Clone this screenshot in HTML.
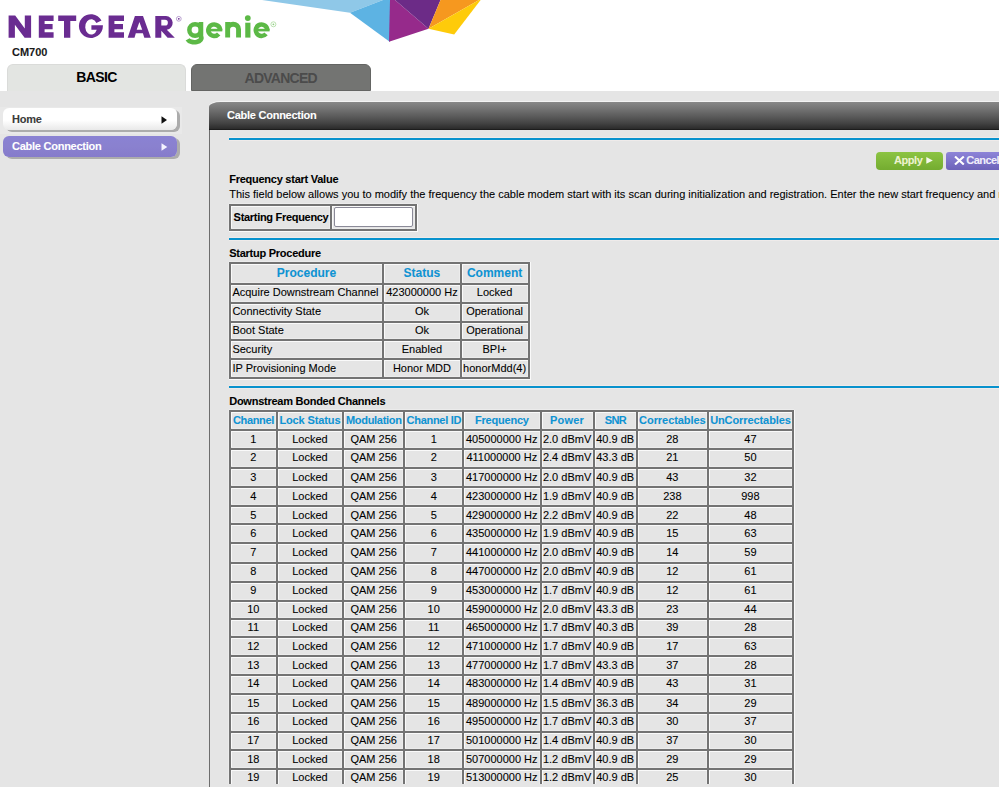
<!DOCTYPE html>
<html><head><meta charset="utf-8">
<style>
*{margin:0;padding:0;box-sizing:border-box}
html,body{width:999px;height:787px;overflow:hidden;background:#fff;font-family:"Liberation Sans",sans-serif;color:#000}
.a{position:absolute;white-space:nowrap}
.b11{font-size:11px;line-height:11px;font-weight:bold;letter-spacing:-0.25px}
.n11{font-size:11px;line-height:11px}
.a{-webkit-text-stroke-width:0.08px}
#band{position:absolute;left:0;top:91px;width:999px;height:696px;background:#e5e5e5}
.tab{position:absolute;top:64px;height:27px;border-radius:6px 6px 0 0;text-align:center;font-size:14px;line-height:14px;font-weight:bold;letter-spacing:-0.6px}
#basic{left:7px;width:179px;background:#e3e5e2;color:#000;border:1px solid #dadbd9;border-bottom:0}
#adv{left:191px;width:179.5px;height:26.5px;background:#737472;color:#4b4b4b;border:1px solid #646563}
.side{position:absolute;left:3px;width:174px;height:22px;border-radius:6px;box-shadow:3px 2px 0 #acacac}
#home{top:108px;background:linear-gradient(#fff 0%,#fff 55%,#e9e9e9 100%)}
#cc{top:135.7px;height:21px;background:linear-gradient(#8a82d3,#8a81cf 50%,#857bcb)}
#panel{position:absolute;left:209px;top:129px;width:800px;height:658px;border-left:1px solid #6d6d6d}
#phead{position:absolute;left:209px;top:102px;width:800px;height:27.5px;border-top-left-radius:12px 5px;background:linear-gradient(#888,#737373 25%,#5c5c5c 50%,#444 75%,#2c2c2c 95%,#141414);box-shadow:0 -1px 0 #f3f3f3}
.blue{position:absolute;left:229px;width:780px;height:2px;background:#0892cd}
</style></head><body>
<svg class="a" style="left:0;top:0" width="999" height="60" viewBox="0 0 999 60">
  <!-- NETGEAR -->
  <g fill="#6a2c91">
    <polygon points="8.6,37.7 8.6,15.6 15.2,15.6 24.8,28.5 24.8,15.6 31.1,15.6 31.1,37.7 24.6,37.7 14.9,24.8 14.9,37.7"/>
    <polygon points="38.8,15.6 53.6,15.6 53.6,21 44.6,21 44.6,24 52.6,24 52.6,29.3 44.6,29.3 44.6,32.3 53.6,32.3 53.6,37.7 38.8,37.7"/>
    <polygon points="58.2,15.6 76.2,15.6 76.2,21 70.3,21 70.3,37.7 64,37.7 64,21 58.2,21"/>
    <polygon points="108.6,15.6 124,15.6 124,21 114.4,21 114.4,24 123,24 123,29.3 114.4,29.3 114.4,32.3 124,32.3 124,37.7 108.6,37.7"/>
    <path fill-rule="evenodd" d="M127.7,37.8 L134.9,15.9 H143 L150.8,37.8 H144.3 L142.9,33.3 H135.8 L134.5,37.8 Z M139.4,21.9 L142.2,29.7 H136.7 Z"/>
    <path fill-rule="evenodd" d="M155.3,37.8 V15.9 H166 A7,7 0 0 1 166.8,29.8 L174.8,37.8 H167.6 L161.3,30.8 V37.8 Z M161.3,19.8 H165 A2.85,2.85 0 0 1 165,25.5 H161.3 Z"/>
    <path d="M101.5,20.5 A12,11.9 0 1 0 102.9,26 L102.9,25.2 L91.4,25.2 L91.4,29.7 L96.8,29.7 A6,7.6 0 1 1 96.4,23 Z"/>
  </g>
  <circle cx="178.8" cy="18.8" r="2.4" fill="none" stroke="#a98cc4" stroke-width="0.8"/>
  <circle cx="178.8" cy="18.8" r="0.9" fill="#6a2c91"/>
  <g fill="none" stroke="#5cb946" stroke-width="4.7">
    <ellipse cx="195.1" cy="30" rx="5.75" ry="5.7" stroke-width="4.5"/>
    <path d="M200.95,21.9 V36.5 A6.6,4 0 0 1 187.6,39.4" stroke-width="4.6"/>
    <path d="M220.1,30.2 A5.9,5.75 0 1 0 218.7,33.9" stroke-width="4.5"/>
    <path d="M209,30.1 H222.3" stroke-width="2.6"/>
    <path d="M227.65,37.6 V21.9 M227.65,29.2 A5.45,5 0 0 1 238.55,29.2 V37.6" stroke-width="4.9"/>
    <path d="M247.85,22.7 V37.6" stroke-width="5.2"/>
    <path d="M267.3,30.2 A5.75,5.75 0 1 0 266,33.9" stroke-width="4.5"/>
    <path d="M256,30.1 H269.6" stroke-width="2.6"/>
  </g>
  <circle cx="247.8" cy="18.1" r="2.9" fill="#5cb946"/>
  <circle cx="273.4" cy="24.3" r="2.5" fill="none" stroke="#b4dfa8" stroke-width="0.9"/>
  <circle cx="273.4" cy="24.3" r="0.9" fill="#8fcf80"/>
  <!-- logo shards -->
  <polygon points="262,0 383,0 350,12.8" fill="#8fc8e8"/>
  <polygon points="350,12.8 383,0 390,0 390,42" fill="#5db3e3"/>
  <polygon points="390,0 395,0 428.5,28.8 389,41.7" fill="#962a8b"/>
  <polygon points="395,0 440.5,0 428.5,28.8" fill="#6c2b87"/>
  <polygon points="440.5,0 479,0 428.5,28.8" fill="#f6981f"/>
  <polygon points="480.6,0 454.2,34.5 428.5,28.8 479,0" fill="#fecb0a"/>
</svg>
<div class="a b11" style="left:12px;top:47px;color:#1a1a1a;letter-spacing:0">CM700</div>
<div id="band"></div>
<div class="tab" id="basic"><div style="padding-top:5.2px">BASIC</div></div>
<div class="tab" id="adv"><div style="padding-top:5.5px;letter-spacing:-0.75px">ADVANCED</div></div>
<div class="a" style="left:0;top:107px;width:182px;height:26.5px;background:#e9e9e9"></div>
<div class="side" id="home"><div class="a b11" style="left:9px;top:5.5px;color:#3a3a3a">Home</div><svg class="a" style="left:158px;top:8px" width="7" height="8" viewBox="0 0 7 8"><polygon points="0.5,0.3 6,4 0.5,7.7" fill="#111"/></svg></div>
<div class="side" id="cc"><div class="a b11" style="left:9px;top:5px;color:#fff">Cable Connection</div><svg class="a" style="left:158px;top:7px" width="7" height="8" viewBox="0 0 7 8"><polygon points="0.5,0.3 6.3,4 0.5,7.7" fill="#f4f2ff"/></svg></div>
<div id="panel"></div>

<div id="phead"></div>
<div class="a" style="left:227.00px;top:110.09px;font-size:11px;line-height:11px;font-weight:bold;color:#fff;letter-spacing:-0.25px;">Cable Connection</div>
<div class="a" style="left:229px;top:137px;width:780px;height:4px;background:#efebea"></div>
<div class="blue" style="top:138px"></div>
<div class="a" style="left:229px;top:237px;width:780px;height:4px;background:#efebea"></div>
<div class="blue" style="top:238px"></div>
<div class="a" style="left:229px;top:385px;width:780px;height:4px;background:#efebea"></div>
<div class="blue" style="top:386px"></div>
<div class="a" style="left:876px;top:152px;width:67px;height:17.5px;border-radius:4px;background:linear-gradient(#8cc443,#74ac30)"></div>
<div class="a" style="left:894.00px;top:154.59px;font-size:11px;line-height:11px;font-weight:bold;color:#eef3d0;letter-spacing:-0.45px;">Apply</div>
<svg class="a" style="left:926px;top:157px" width="7" height="7" viewBox="0 0 7 7"><polygon points="0.3,0 6.8,3.4 0.3,6.8" fill="#f4f8ec"/></svg>
<div class="a" style="left:946px;top:152px;width:60px;height:17.5px;border-radius:3px;background:linear-gradient(#8d84d8,#6d63b9)"></div>
<svg class="a" style="left:954px;top:156px" width="11" height="9" viewBox="0 0 11 9"><path d="M1,0.5 L9.8,8.5 M9.8,0.5 L1,8.5" stroke="#fff" stroke-width="2.1"/></svg>
<div class="a" style="left:966.30px;top:154.59px;font-size:11px;line-height:11px;font-weight:bold;color:#f0eefa;letter-spacing:-0.55px;">Cancel</div>
<div class="a" style="left:229.20px;top:173.79px;font-size:11px;line-height:11px;font-weight:bold;color:#000;letter-spacing:-0.25px;">Frequency start Value</div>
<div class="a" style="left:229.20px;top:189.09px;font-size:11px;line-height:11px;font-weight:normal;color:#000;letter-spacing:0px;">This field below allows you to modify the frequency the cable modem start with its scan during initialization and registration. Enter the new start frequency and registration.</div>
<div class="a" style="left:228px;top:204px;width:1px;height:27px;background:#ececec"></div>
<div class="a" style="left:231px;top:204px;width:1px;height:27px;background:#fafafa"></div>
<div class="a" style="left:329px;top:204px;width:1px;height:27px;background:#ececec"></div>
<div class="a" style="left:332px;top:204px;width:1px;height:27px;background:#fafafa"></div>
<div class="a" style="left:414px;top:204px;width:1px;height:27px;background:#ececec"></div>
<div class="a" style="left:417px;top:204px;width:1px;height:27px;background:#fafafa"></div>
<div class="a" style="left:229px;top:203px;width:188px;height:1px;background:#ececec"></div>
<div class="a" style="left:229px;top:206px;width:189px;height:1px;background:#fafafa"></div>
<div class="a" style="left:229px;top:228px;width:188px;height:1px;background:#ececec"></div>
<div class="a" style="left:229px;top:231px;width:189px;height:1px;background:#fafafa"></div>
<div class="a" style="left:229px;top:204px;width:2px;height:27px;background:#737373"></div>
<div class="a" style="left:330px;top:204px;width:2px;height:27px;background:#737373"></div>
<div class="a" style="left:415px;top:204px;width:2px;height:27px;background:#737373"></div>
<div class="a" style="left:229px;top:204px;width:188px;height:2px;background:#737373"></div>
<div class="a" style="left:229px;top:229px;width:188px;height:2px;background:#737373"></div>
<div class="a" style="left:233.60px;top:211.59px;font-size:11px;line-height:11px;font-weight:bold;color:#000;letter-spacing:-0.3px;">Starting Frequency</div>
<div class="a" style="left:334px;top:207px;width:79px;height:20px;background:#fff;border:1px solid #8b8a98;border-radius:2px"></div>
<div class="a" style="left:229.20px;top:247.99px;font-size:11px;line-height:11px;font-weight:bold;color:#000;letter-spacing:-0.25px;">Startup Procedure</div>
<div class="a" style="left:228px;top:262px;width:1px;height:117px;background:#ececec"></div>
<div class="a" style="left:231px;top:262px;width:1px;height:117px;background:#fafafa"></div>
<div class="a" style="left:381px;top:262px;width:1px;height:117px;background:#ececec"></div>
<div class="a" style="left:384px;top:262px;width:1px;height:117px;background:#fafafa"></div>
<div class="a" style="left:459px;top:262px;width:1px;height:117px;background:#ececec"></div>
<div class="a" style="left:462px;top:262px;width:1px;height:117px;background:#fafafa"></div>
<div class="a" style="left:527px;top:262px;width:1px;height:117px;background:#ececec"></div>
<div class="a" style="left:530px;top:262px;width:1px;height:117px;background:#fafafa"></div>
<div class="a" style="left:229px;top:261px;width:301px;height:1px;background:#ececec"></div>
<div class="a" style="left:229px;top:264px;width:302px;height:1px;background:#fafafa"></div>
<div class="a" style="left:229px;top:282px;width:301px;height:1px;background:#ececec"></div>
<div class="a" style="left:229px;top:285px;width:302px;height:1px;background:#fafafa"></div>
<div class="a" style="left:229px;top:301px;width:301px;height:1px;background:#ececec"></div>
<div class="a" style="left:229px;top:304px;width:302px;height:1px;background:#fafafa"></div>
<div class="a" style="left:229px;top:320px;width:301px;height:1px;background:#ececec"></div>
<div class="a" style="left:229px;top:323px;width:302px;height:1px;background:#fafafa"></div>
<div class="a" style="left:229px;top:338px;width:301px;height:1px;background:#ececec"></div>
<div class="a" style="left:229px;top:341px;width:302px;height:1px;background:#fafafa"></div>
<div class="a" style="left:229px;top:357px;width:301px;height:1px;background:#ececec"></div>
<div class="a" style="left:229px;top:360px;width:302px;height:1px;background:#fafafa"></div>
<div class="a" style="left:229px;top:376px;width:301px;height:1px;background:#ececec"></div>
<div class="a" style="left:229px;top:379px;width:302px;height:1px;background:#fafafa"></div>
<div class="a" style="left:229px;top:262px;width:2px;height:117px;background:#737373"></div>
<div class="a" style="left:382px;top:262px;width:2px;height:117px;background:#737373"></div>
<div class="a" style="left:460px;top:262px;width:2px;height:117px;background:#737373"></div>
<div class="a" style="left:528px;top:262px;width:2px;height:117px;background:#737373"></div>
<div class="a" style="left:229px;top:262px;width:301px;height:2px;background:#737373"></div>
<div class="a" style="left:229px;top:283px;width:301px;height:2px;background:#737373"></div>
<div class="a" style="left:229px;top:302px;width:301px;height:2px;background:#737373"></div>
<div class="a" style="left:229px;top:321px;width:301px;height:2px;background:#737373"></div>
<div class="a" style="left:229px;top:339px;width:301px;height:2px;background:#737373"></div>
<div class="a" style="left:229px;top:358px;width:301px;height:2px;background:#737373"></div>
<div class="a" style="left:229px;top:377px;width:301px;height:2px;background:#737373"></div>
<div class="a" style="left:229.80px;width:153.50px;text-align:center;top:267.14px;font-size:12px;line-height:12px;font-weight:bold;color:#0f93d3;letter-spacing:0px;text-indent:0.00px">Procedure</div>
<div class="a" style="left:383.30px;width:77.30px;text-align:center;top:267.14px;font-size:12px;line-height:12px;font-weight:bold;color:#0f93d3;letter-spacing:0px;text-indent:0.00px">Status</div>
<div class="a" style="left:460.60px;width:68.00px;text-align:center;top:267.14px;font-size:12px;line-height:12px;font-weight:bold;color:#0f93d3;letter-spacing:0px;text-indent:0.00px">Comment</div>
<div class="a" style="left:232.40px;top:287.09px;font-size:11px;line-height:11px;font-weight:normal;color:#000;letter-spacing:0px;">Acquire Downstream Channel</div>
<div class="a" style="left:383.30px;width:77.30px;text-align:center;top:287.09px;font-size:11px;line-height:11px;font-weight:normal;color:#000;letter-spacing:0px;text-indent:0.00px">423000000 Hz</div>
<div class="a" style="left:460.60px;width:68.00px;text-align:center;top:287.09px;font-size:11px;line-height:11px;font-weight:normal;color:#000;letter-spacing:0px;text-indent:0.00px">Locked</div>
<div class="a" style="left:232.40px;top:306.09px;font-size:11px;line-height:11px;font-weight:normal;color:#000;letter-spacing:0px;">Connectivity State</div>
<div class="a" style="left:383.30px;width:77.30px;text-align:center;top:306.09px;font-size:11px;line-height:11px;font-weight:normal;color:#000;letter-spacing:0px;text-indent:0.00px">Ok</div>
<div class="a" style="left:460.60px;width:68.00px;text-align:center;top:306.09px;font-size:11px;line-height:11px;font-weight:normal;color:#000;letter-spacing:0px;text-indent:0.00px">Operational</div>
<div class="a" style="left:232.40px;top:324.99px;font-size:11px;line-height:11px;font-weight:normal;color:#000;letter-spacing:0px;">Boot State</div>
<div class="a" style="left:383.30px;width:77.30px;text-align:center;top:324.99px;font-size:11px;line-height:11px;font-weight:normal;color:#000;letter-spacing:0px;text-indent:0.00px">Ok</div>
<div class="a" style="left:460.60px;width:68.00px;text-align:center;top:324.99px;font-size:11px;line-height:11px;font-weight:normal;color:#000;letter-spacing:0px;text-indent:0.00px">Operational</div>
<div class="a" style="left:232.40px;top:343.69px;font-size:11px;line-height:11px;font-weight:normal;color:#000;letter-spacing:0px;">Security</div>
<div class="a" style="left:383.30px;width:77.30px;text-align:center;top:343.69px;font-size:11px;line-height:11px;font-weight:normal;color:#000;letter-spacing:0px;text-indent:0.00px">Enabled</div>
<div class="a" style="left:460.60px;width:68.00px;text-align:center;top:343.69px;font-size:11px;line-height:11px;font-weight:normal;color:#000;letter-spacing:0px;text-indent:0.00px">BPI+</div>
<div class="a" style="left:232.40px;top:362.59px;font-size:11px;line-height:11px;font-weight:normal;color:#000;letter-spacing:0px;">IP Provisioning Mode</div>
<div class="a" style="left:383.30px;width:77.30px;text-align:center;top:362.59px;font-size:11px;line-height:11px;font-weight:normal;color:#000;letter-spacing:0px;text-indent:0.00px">Honor MDD</div>
<div class="a" style="left:460.60px;width:68.00px;text-align:center;top:362.59px;font-size:11px;line-height:11px;font-weight:normal;color:#000;letter-spacing:0px;text-indent:0.00px">honorMdd(4)</div>
<div class="a" style="left:229.20px;top:395.79px;font-size:11px;line-height:11px;font-weight:bold;color:#000;letter-spacing:-0.25px;">Downstream Bonded Channels</div>
<div class="a" style="left:228px;top:410px;width:1px;height:374px;background:#ececec"></div>
<div class="a" style="left:231px;top:410px;width:1px;height:374px;background:#fafafa"></div>
<div class="a" style="left:275px;top:410px;width:1px;height:374px;background:#ececec"></div>
<div class="a" style="left:278px;top:410px;width:1px;height:374px;background:#fafafa"></div>
<div class="a" style="left:341px;top:410px;width:1px;height:374px;background:#ececec"></div>
<div class="a" style="left:344px;top:410px;width:1px;height:374px;background:#fafafa"></div>
<div class="a" style="left:402px;top:410px;width:1px;height:374px;background:#ececec"></div>
<div class="a" style="left:405px;top:410px;width:1px;height:374px;background:#fafafa"></div>
<div class="a" style="left:461px;top:410px;width:1px;height:374px;background:#ececec"></div>
<div class="a" style="left:464px;top:410px;width:1px;height:374px;background:#fafafa"></div>
<div class="a" style="left:539px;top:410px;width:1px;height:374px;background:#ececec"></div>
<div class="a" style="left:542px;top:410px;width:1px;height:374px;background:#fafafa"></div>
<div class="a" style="left:592px;top:410px;width:1px;height:374px;background:#ececec"></div>
<div class="a" style="left:595px;top:410px;width:1px;height:374px;background:#fafafa"></div>
<div class="a" style="left:635px;top:410px;width:1px;height:374px;background:#ececec"></div>
<div class="a" style="left:638px;top:410px;width:1px;height:374px;background:#fafafa"></div>
<div class="a" style="left:706px;top:410px;width:1px;height:374px;background:#ececec"></div>
<div class="a" style="left:709px;top:410px;width:1px;height:374px;background:#fafafa"></div>
<div class="a" style="left:791px;top:410px;width:1px;height:374px;background:#ececec"></div>
<div class="a" style="left:794px;top:410px;width:1px;height:374px;background:#fafafa"></div>
<div class="a" style="left:229px;top:409px;width:565px;height:1px;background:#ececec"></div>
<div class="a" style="left:229px;top:412px;width:566px;height:1px;background:#fafafa"></div>
<div class="a" style="left:229px;top:428px;width:565px;height:1px;background:#ececec"></div>
<div class="a" style="left:229px;top:431px;width:566px;height:1px;background:#fafafa"></div>
<div class="a" style="left:229px;top:447px;width:565px;height:1px;background:#ececec"></div>
<div class="a" style="left:229px;top:450px;width:566px;height:1px;background:#fafafa"></div>
<div class="a" style="left:229px;top:466px;width:565px;height:1px;background:#ececec"></div>
<div class="a" style="left:229px;top:469px;width:566px;height:1px;background:#fafafa"></div>
<div class="a" style="left:229px;top:485px;width:565px;height:1px;background:#ececec"></div>
<div class="a" style="left:229px;top:488px;width:566px;height:1px;background:#fafafa"></div>
<div class="a" style="left:229px;top:504px;width:565px;height:1px;background:#ececec"></div>
<div class="a" style="left:229px;top:507px;width:566px;height:1px;background:#fafafa"></div>
<div class="a" style="left:229px;top:522px;width:565px;height:1px;background:#ececec"></div>
<div class="a" style="left:229px;top:525px;width:566px;height:1px;background:#fafafa"></div>
<div class="a" style="left:229px;top:541px;width:565px;height:1px;background:#ececec"></div>
<div class="a" style="left:229px;top:544px;width:566px;height:1px;background:#fafafa"></div>
<div class="a" style="left:229px;top:561px;width:565px;height:1px;background:#ececec"></div>
<div class="a" style="left:229px;top:564px;width:566px;height:1px;background:#fafafa"></div>
<div class="a" style="left:229px;top:580px;width:565px;height:1px;background:#ececec"></div>
<div class="a" style="left:229px;top:583px;width:566px;height:1px;background:#fafafa"></div>
<div class="a" style="left:229px;top:599px;width:565px;height:1px;background:#ececec"></div>
<div class="a" style="left:229px;top:602px;width:566px;height:1px;background:#fafafa"></div>
<div class="a" style="left:229px;top:617px;width:565px;height:1px;background:#ececec"></div>
<div class="a" style="left:229px;top:620px;width:566px;height:1px;background:#fafafa"></div>
<div class="a" style="left:229px;top:635px;width:565px;height:1px;background:#ececec"></div>
<div class="a" style="left:229px;top:638px;width:566px;height:1px;background:#fafafa"></div>
<div class="a" style="left:229px;top:654px;width:565px;height:1px;background:#ececec"></div>
<div class="a" style="left:229px;top:657px;width:566px;height:1px;background:#fafafa"></div>
<div class="a" style="left:229px;top:673px;width:565px;height:1px;background:#ececec"></div>
<div class="a" style="left:229px;top:676px;width:566px;height:1px;background:#fafafa"></div>
<div class="a" style="left:229px;top:692px;width:565px;height:1px;background:#ececec"></div>
<div class="a" style="left:229px;top:695px;width:566px;height:1px;background:#fafafa"></div>
<div class="a" style="left:229px;top:711px;width:565px;height:1px;background:#ececec"></div>
<div class="a" style="left:229px;top:714px;width:566px;height:1px;background:#fafafa"></div>
<div class="a" style="left:229px;top:730px;width:565px;height:1px;background:#ececec"></div>
<div class="a" style="left:229px;top:733px;width:566px;height:1px;background:#fafafa"></div>
<div class="a" style="left:229px;top:748px;width:565px;height:1px;background:#ececec"></div>
<div class="a" style="left:229px;top:751px;width:566px;height:1px;background:#fafafa"></div>
<div class="a" style="left:229px;top:767px;width:565px;height:1px;background:#ececec"></div>
<div class="a" style="left:229px;top:770px;width:566px;height:1px;background:#fafafa"></div>
<div class="a" style="left:229px;top:410px;width:2px;height:374px;background:#737373"></div>
<div class="a" style="left:276px;top:410px;width:2px;height:374px;background:#737373"></div>
<div class="a" style="left:342px;top:410px;width:2px;height:374px;background:#737373"></div>
<div class="a" style="left:403px;top:410px;width:2px;height:374px;background:#737373"></div>
<div class="a" style="left:462px;top:410px;width:2px;height:374px;background:#737373"></div>
<div class="a" style="left:540px;top:410px;width:2px;height:374px;background:#737373"></div>
<div class="a" style="left:593px;top:410px;width:2px;height:374px;background:#737373"></div>
<div class="a" style="left:636px;top:410px;width:2px;height:374px;background:#737373"></div>
<div class="a" style="left:707px;top:410px;width:2px;height:374px;background:#737373"></div>
<div class="a" style="left:792px;top:410px;width:2px;height:374px;background:#737373"></div>
<div class="a" style="left:229px;top:410px;width:565px;height:2px;background:#737373"></div>
<div class="a" style="left:229px;top:429px;width:565px;height:2px;background:#737373"></div>
<div class="a" style="left:229px;top:448px;width:565px;height:2px;background:#737373"></div>
<div class="a" style="left:229px;top:467px;width:565px;height:2px;background:#737373"></div>
<div class="a" style="left:229px;top:486px;width:565px;height:2px;background:#737373"></div>
<div class="a" style="left:229px;top:505px;width:565px;height:2px;background:#737373"></div>
<div class="a" style="left:229px;top:523px;width:565px;height:2px;background:#737373"></div>
<div class="a" style="left:229px;top:542px;width:565px;height:2px;background:#737373"></div>
<div class="a" style="left:229px;top:562px;width:565px;height:2px;background:#737373"></div>
<div class="a" style="left:229px;top:581px;width:565px;height:2px;background:#737373"></div>
<div class="a" style="left:229px;top:600px;width:565px;height:2px;background:#737373"></div>
<div class="a" style="left:229px;top:618px;width:565px;height:2px;background:#737373"></div>
<div class="a" style="left:229px;top:636px;width:565px;height:2px;background:#737373"></div>
<div class="a" style="left:229px;top:655px;width:565px;height:2px;background:#737373"></div>
<div class="a" style="left:229px;top:674px;width:565px;height:2px;background:#737373"></div>
<div class="a" style="left:229px;top:693px;width:565px;height:2px;background:#737373"></div>
<div class="a" style="left:229px;top:712px;width:565px;height:2px;background:#737373"></div>
<div class="a" style="left:229px;top:731px;width:565px;height:2px;background:#737373"></div>
<div class="a" style="left:229px;top:749px;width:565px;height:2px;background:#737373"></div>
<div class="a" style="left:229px;top:768px;width:565px;height:2px;background:#737373"></div>
<div class="a" style="left:229.80px;width:47.00px;text-align:center;top:414.79px;font-size:11px;line-height:11px;font-weight:bold;color:#0f93d3;letter-spacing:-0.34px;text-indent:0.34px">Channel</div>
<div class="a" style="left:276.80px;width:66.20px;text-align:center;top:414.79px;font-size:11px;line-height:11px;font-weight:bold;color:#0f93d3;letter-spacing:-0.12px;text-indent:0.12px">Lock Status</div>
<div class="a" style="left:343.00px;width:61.30px;text-align:center;top:414.79px;font-size:11px;line-height:11px;font-weight:bold;color:#0f93d3;letter-spacing:-0.3px;text-indent:0.30px">Modulation</div>
<div class="a" style="left:404.30px;width:58.80px;text-align:center;top:414.79px;font-size:11px;line-height:11px;font-weight:bold;color:#0f93d3;letter-spacing:-0.3px;text-indent:0.30px">Channel ID</div>
<div class="a" style="left:463.10px;width:77.40px;text-align:center;top:414.79px;font-size:11px;line-height:11px;font-weight:bold;color:#0f93d3;letter-spacing:-0.2px;text-indent:0.20px">Frequency</div>
<div class="a" style="left:540.50px;width:53.20px;text-align:center;top:414.79px;font-size:11px;line-height:11px;font-weight:bold;color:#0f93d3;letter-spacing:0.2px;text-indent:-0.20px">Power</div>
<div class="a" style="left:593.70px;width:42.90px;text-align:center;top:414.79px;font-size:11px;line-height:11px;font-weight:bold;color:#0f93d3;letter-spacing:-0.6px;text-indent:0.60px">SNR</div>
<div class="a" style="left:636.60px;width:71.50px;text-align:center;top:414.79px;font-size:11px;line-height:11px;font-weight:bold;color:#0f93d3;letter-spacing:-0.06px;text-indent:0.06px">Correctables</div>
<div class="a" style="left:708.10px;width:84.70px;text-align:center;top:414.79px;font-size:11px;line-height:11px;font-weight:bold;color:#0f93d3;letter-spacing:-0.09px;text-indent:0.09px">UnCorrectables</div>
<div class="a" style="left:229.80px;width:47.00px;text-align:center;top:433.69px;font-size:11px;line-height:11px;font-weight:normal;color:#000;letter-spacing:0px;text-indent:0.00px">1</div>
<div class="a" style="left:276.80px;width:66.20px;text-align:center;top:433.69px;font-size:11px;line-height:11px;font-weight:normal;color:#000;letter-spacing:0px;text-indent:0.00px">Locked</div>
<div class="a" style="left:343.00px;width:61.30px;text-align:center;top:433.69px;font-size:11px;line-height:11px;font-weight:normal;color:#000;letter-spacing:0px;text-indent:0.00px">QAM 256</div>
<div class="a" style="left:404.30px;width:58.80px;text-align:center;top:433.69px;font-size:11px;line-height:11px;font-weight:normal;color:#000;letter-spacing:0px;text-indent:0.00px">1</div>
<div class="a" style="left:463.10px;width:77.40px;text-align:center;top:433.69px;font-size:11px;line-height:11px;font-weight:normal;color:#000;letter-spacing:0px;text-indent:0.00px">405000000 Hz</div>
<div class="a" style="left:540.50px;width:53.20px;text-align:center;top:433.69px;font-size:11px;line-height:11px;font-weight:normal;color:#000;letter-spacing:0px;text-indent:0.00px">2.0 dBmV</div>
<div class="a" style="left:593.70px;width:42.90px;text-align:center;top:433.69px;font-size:11px;line-height:11px;font-weight:normal;color:#000;letter-spacing:0px;text-indent:0.00px">40.9 dB</div>
<div class="a" style="left:636.60px;width:71.50px;text-align:center;top:433.69px;font-size:11px;line-height:11px;font-weight:normal;color:#000;letter-spacing:0px;text-indent:0.00px">28</div>
<div class="a" style="left:708.10px;width:84.70px;text-align:center;top:433.69px;font-size:11px;line-height:11px;font-weight:normal;color:#000;letter-spacing:0px;text-indent:0.00px">47</div>
<div class="a" style="left:229.80px;width:47.00px;text-align:center;top:452.49px;font-size:11px;line-height:11px;font-weight:normal;color:#000;letter-spacing:0px;text-indent:0.00px">2</div>
<div class="a" style="left:276.80px;width:66.20px;text-align:center;top:452.49px;font-size:11px;line-height:11px;font-weight:normal;color:#000;letter-spacing:0px;text-indent:0.00px">Locked</div>
<div class="a" style="left:343.00px;width:61.30px;text-align:center;top:452.49px;font-size:11px;line-height:11px;font-weight:normal;color:#000;letter-spacing:0px;text-indent:0.00px">QAM 256</div>
<div class="a" style="left:404.30px;width:58.80px;text-align:center;top:452.49px;font-size:11px;line-height:11px;font-weight:normal;color:#000;letter-spacing:0px;text-indent:0.00px">2</div>
<div class="a" style="left:463.10px;width:77.40px;text-align:center;top:452.49px;font-size:11px;line-height:11px;font-weight:normal;color:#000;letter-spacing:0px;text-indent:0.00px">411000000 Hz</div>
<div class="a" style="left:540.50px;width:53.20px;text-align:center;top:452.49px;font-size:11px;line-height:11px;font-weight:normal;color:#000;letter-spacing:0px;text-indent:0.00px">2.4 dBmV</div>
<div class="a" style="left:593.70px;width:42.90px;text-align:center;top:452.49px;font-size:11px;line-height:11px;font-weight:normal;color:#000;letter-spacing:0px;text-indent:0.00px">43.3 dB</div>
<div class="a" style="left:636.60px;width:71.50px;text-align:center;top:452.49px;font-size:11px;line-height:11px;font-weight:normal;color:#000;letter-spacing:0px;text-indent:0.00px">21</div>
<div class="a" style="left:708.10px;width:84.70px;text-align:center;top:452.49px;font-size:11px;line-height:11px;font-weight:normal;color:#000;letter-spacing:0px;text-indent:0.00px">50</div>
<div class="a" style="left:229.80px;width:47.00px;text-align:center;top:471.59px;font-size:11px;line-height:11px;font-weight:normal;color:#000;letter-spacing:0px;text-indent:0.00px">3</div>
<div class="a" style="left:276.80px;width:66.20px;text-align:center;top:471.59px;font-size:11px;line-height:11px;font-weight:normal;color:#000;letter-spacing:0px;text-indent:0.00px">Locked</div>
<div class="a" style="left:343.00px;width:61.30px;text-align:center;top:471.59px;font-size:11px;line-height:11px;font-weight:normal;color:#000;letter-spacing:0px;text-indent:0.00px">QAM 256</div>
<div class="a" style="left:404.30px;width:58.80px;text-align:center;top:471.59px;font-size:11px;line-height:11px;font-weight:normal;color:#000;letter-spacing:0px;text-indent:0.00px">3</div>
<div class="a" style="left:463.10px;width:77.40px;text-align:center;top:471.59px;font-size:11px;line-height:11px;font-weight:normal;color:#000;letter-spacing:0px;text-indent:0.00px">417000000 Hz</div>
<div class="a" style="left:540.50px;width:53.20px;text-align:center;top:471.59px;font-size:11px;line-height:11px;font-weight:normal;color:#000;letter-spacing:0px;text-indent:0.00px">2.0 dBmV</div>
<div class="a" style="left:593.70px;width:42.90px;text-align:center;top:471.59px;font-size:11px;line-height:11px;font-weight:normal;color:#000;letter-spacing:0px;text-indent:0.00px">40.9 dB</div>
<div class="a" style="left:636.60px;width:71.50px;text-align:center;top:471.59px;font-size:11px;line-height:11px;font-weight:normal;color:#000;letter-spacing:0px;text-indent:0.00px">43</div>
<div class="a" style="left:708.10px;width:84.70px;text-align:center;top:471.59px;font-size:11px;line-height:11px;font-weight:normal;color:#000;letter-spacing:0px;text-indent:0.00px">32</div>
<div class="a" style="left:229.80px;width:47.00px;text-align:center;top:490.59px;font-size:11px;line-height:11px;font-weight:normal;color:#000;letter-spacing:0px;text-indent:0.00px">4</div>
<div class="a" style="left:276.80px;width:66.20px;text-align:center;top:490.59px;font-size:11px;line-height:11px;font-weight:normal;color:#000;letter-spacing:0px;text-indent:0.00px">Locked</div>
<div class="a" style="left:343.00px;width:61.30px;text-align:center;top:490.59px;font-size:11px;line-height:11px;font-weight:normal;color:#000;letter-spacing:0px;text-indent:0.00px">QAM 256</div>
<div class="a" style="left:404.30px;width:58.80px;text-align:center;top:490.59px;font-size:11px;line-height:11px;font-weight:normal;color:#000;letter-spacing:0px;text-indent:0.00px">4</div>
<div class="a" style="left:463.10px;width:77.40px;text-align:center;top:490.59px;font-size:11px;line-height:11px;font-weight:normal;color:#000;letter-spacing:0px;text-indent:0.00px">423000000 Hz</div>
<div class="a" style="left:540.50px;width:53.20px;text-align:center;top:490.59px;font-size:11px;line-height:11px;font-weight:normal;color:#000;letter-spacing:0px;text-indent:0.00px">1.9 dBmV</div>
<div class="a" style="left:593.70px;width:42.90px;text-align:center;top:490.59px;font-size:11px;line-height:11px;font-weight:normal;color:#000;letter-spacing:0px;text-indent:0.00px">40.9 dB</div>
<div class="a" style="left:636.60px;width:71.50px;text-align:center;top:490.59px;font-size:11px;line-height:11px;font-weight:normal;color:#000;letter-spacing:0px;text-indent:0.00px">238</div>
<div class="a" style="left:708.10px;width:84.70px;text-align:center;top:490.59px;font-size:11px;line-height:11px;font-weight:normal;color:#000;letter-spacing:0px;text-indent:0.00px">998</div>
<div class="a" style="left:229.80px;width:47.00px;text-align:center;top:509.69px;font-size:11px;line-height:11px;font-weight:normal;color:#000;letter-spacing:0px;text-indent:0.00px">5</div>
<div class="a" style="left:276.80px;width:66.20px;text-align:center;top:509.69px;font-size:11px;line-height:11px;font-weight:normal;color:#000;letter-spacing:0px;text-indent:0.00px">Locked</div>
<div class="a" style="left:343.00px;width:61.30px;text-align:center;top:509.69px;font-size:11px;line-height:11px;font-weight:normal;color:#000;letter-spacing:0px;text-indent:0.00px">QAM 256</div>
<div class="a" style="left:404.30px;width:58.80px;text-align:center;top:509.69px;font-size:11px;line-height:11px;font-weight:normal;color:#000;letter-spacing:0px;text-indent:0.00px">5</div>
<div class="a" style="left:463.10px;width:77.40px;text-align:center;top:509.69px;font-size:11px;line-height:11px;font-weight:normal;color:#000;letter-spacing:0px;text-indent:0.00px">429000000 Hz</div>
<div class="a" style="left:540.50px;width:53.20px;text-align:center;top:509.69px;font-size:11px;line-height:11px;font-weight:normal;color:#000;letter-spacing:0px;text-indent:0.00px">2.2 dBmV</div>
<div class="a" style="left:593.70px;width:42.90px;text-align:center;top:509.69px;font-size:11px;line-height:11px;font-weight:normal;color:#000;letter-spacing:0px;text-indent:0.00px">40.9 dB</div>
<div class="a" style="left:636.60px;width:71.50px;text-align:center;top:509.69px;font-size:11px;line-height:11px;font-weight:normal;color:#000;letter-spacing:0px;text-indent:0.00px">22</div>
<div class="a" style="left:708.10px;width:84.70px;text-align:center;top:509.69px;font-size:11px;line-height:11px;font-weight:normal;color:#000;letter-spacing:0px;text-indent:0.00px">48</div>
<div class="a" style="left:229.80px;width:47.00px;text-align:center;top:528.19px;font-size:11px;line-height:11px;font-weight:normal;color:#000;letter-spacing:0px;text-indent:0.00px">6</div>
<div class="a" style="left:276.80px;width:66.20px;text-align:center;top:528.19px;font-size:11px;line-height:11px;font-weight:normal;color:#000;letter-spacing:0px;text-indent:0.00px">Locked</div>
<div class="a" style="left:343.00px;width:61.30px;text-align:center;top:528.19px;font-size:11px;line-height:11px;font-weight:normal;color:#000;letter-spacing:0px;text-indent:0.00px">QAM 256</div>
<div class="a" style="left:404.30px;width:58.80px;text-align:center;top:528.19px;font-size:11px;line-height:11px;font-weight:normal;color:#000;letter-spacing:0px;text-indent:0.00px">6</div>
<div class="a" style="left:463.10px;width:77.40px;text-align:center;top:528.19px;font-size:11px;line-height:11px;font-weight:normal;color:#000;letter-spacing:0px;text-indent:0.00px">435000000 Hz</div>
<div class="a" style="left:540.50px;width:53.20px;text-align:center;top:528.19px;font-size:11px;line-height:11px;font-weight:normal;color:#000;letter-spacing:0px;text-indent:0.00px">1.9 dBmV</div>
<div class="a" style="left:593.70px;width:42.90px;text-align:center;top:528.19px;font-size:11px;line-height:11px;font-weight:normal;color:#000;letter-spacing:0px;text-indent:0.00px">40.9 dB</div>
<div class="a" style="left:636.60px;width:71.50px;text-align:center;top:528.19px;font-size:11px;line-height:11px;font-weight:normal;color:#000;letter-spacing:0px;text-indent:0.00px">15</div>
<div class="a" style="left:708.10px;width:84.70px;text-align:center;top:528.19px;font-size:11px;line-height:11px;font-weight:normal;color:#000;letter-spacing:0px;text-indent:0.00px">63</div>
<div class="a" style="left:229.80px;width:47.00px;text-align:center;top:547.29px;font-size:11px;line-height:11px;font-weight:normal;color:#000;letter-spacing:0px;text-indent:0.00px">7</div>
<div class="a" style="left:276.80px;width:66.20px;text-align:center;top:547.29px;font-size:11px;line-height:11px;font-weight:normal;color:#000;letter-spacing:0px;text-indent:0.00px">Locked</div>
<div class="a" style="left:343.00px;width:61.30px;text-align:center;top:547.29px;font-size:11px;line-height:11px;font-weight:normal;color:#000;letter-spacing:0px;text-indent:0.00px">QAM 256</div>
<div class="a" style="left:404.30px;width:58.80px;text-align:center;top:547.29px;font-size:11px;line-height:11px;font-weight:normal;color:#000;letter-spacing:0px;text-indent:0.00px">7</div>
<div class="a" style="left:463.10px;width:77.40px;text-align:center;top:547.29px;font-size:11px;line-height:11px;font-weight:normal;color:#000;letter-spacing:0px;text-indent:0.00px">441000000 Hz</div>
<div class="a" style="left:540.50px;width:53.20px;text-align:center;top:547.29px;font-size:11px;line-height:11px;font-weight:normal;color:#000;letter-spacing:0px;text-indent:0.00px">2.0 dBmV</div>
<div class="a" style="left:593.70px;width:42.90px;text-align:center;top:547.29px;font-size:11px;line-height:11px;font-weight:normal;color:#000;letter-spacing:0px;text-indent:0.00px">40.9 dB</div>
<div class="a" style="left:636.60px;width:71.50px;text-align:center;top:547.29px;font-size:11px;line-height:11px;font-weight:normal;color:#000;letter-spacing:0px;text-indent:0.00px">14</div>
<div class="a" style="left:708.10px;width:84.70px;text-align:center;top:547.29px;font-size:11px;line-height:11px;font-weight:normal;color:#000;letter-spacing:0px;text-indent:0.00px">59</div>
<div class="a" style="left:229.80px;width:47.00px;text-align:center;top:566.39px;font-size:11px;line-height:11px;font-weight:normal;color:#000;letter-spacing:0px;text-indent:0.00px">8</div>
<div class="a" style="left:276.80px;width:66.20px;text-align:center;top:566.39px;font-size:11px;line-height:11px;font-weight:normal;color:#000;letter-spacing:0px;text-indent:0.00px">Locked</div>
<div class="a" style="left:343.00px;width:61.30px;text-align:center;top:566.39px;font-size:11px;line-height:11px;font-weight:normal;color:#000;letter-spacing:0px;text-indent:0.00px">QAM 256</div>
<div class="a" style="left:404.30px;width:58.80px;text-align:center;top:566.39px;font-size:11px;line-height:11px;font-weight:normal;color:#000;letter-spacing:0px;text-indent:0.00px">8</div>
<div class="a" style="left:463.10px;width:77.40px;text-align:center;top:566.39px;font-size:11px;line-height:11px;font-weight:normal;color:#000;letter-spacing:0px;text-indent:0.00px">447000000 Hz</div>
<div class="a" style="left:540.50px;width:53.20px;text-align:center;top:566.39px;font-size:11px;line-height:11px;font-weight:normal;color:#000;letter-spacing:0px;text-indent:0.00px">2.0 dBmV</div>
<div class="a" style="left:593.70px;width:42.90px;text-align:center;top:566.39px;font-size:11px;line-height:11px;font-weight:normal;color:#000;letter-spacing:0px;text-indent:0.00px">40.9 dB</div>
<div class="a" style="left:636.60px;width:71.50px;text-align:center;top:566.39px;font-size:11px;line-height:11px;font-weight:normal;color:#000;letter-spacing:0px;text-indent:0.00px">12</div>
<div class="a" style="left:708.10px;width:84.70px;text-align:center;top:566.39px;font-size:11px;line-height:11px;font-weight:normal;color:#000;letter-spacing:0px;text-indent:0.00px">61</div>
<div class="a" style="left:229.80px;width:47.00px;text-align:center;top:585.39px;font-size:11px;line-height:11px;font-weight:normal;color:#000;letter-spacing:0px;text-indent:0.00px">9</div>
<div class="a" style="left:276.80px;width:66.20px;text-align:center;top:585.39px;font-size:11px;line-height:11px;font-weight:normal;color:#000;letter-spacing:0px;text-indent:0.00px">Locked</div>
<div class="a" style="left:343.00px;width:61.30px;text-align:center;top:585.39px;font-size:11px;line-height:11px;font-weight:normal;color:#000;letter-spacing:0px;text-indent:0.00px">QAM 256</div>
<div class="a" style="left:404.30px;width:58.80px;text-align:center;top:585.39px;font-size:11px;line-height:11px;font-weight:normal;color:#000;letter-spacing:0px;text-indent:0.00px">9</div>
<div class="a" style="left:463.10px;width:77.40px;text-align:center;top:585.39px;font-size:11px;line-height:11px;font-weight:normal;color:#000;letter-spacing:0px;text-indent:0.00px">453000000 Hz</div>
<div class="a" style="left:540.50px;width:53.20px;text-align:center;top:585.39px;font-size:11px;line-height:11px;font-weight:normal;color:#000;letter-spacing:0px;text-indent:0.00px">1.7 dBmV</div>
<div class="a" style="left:593.70px;width:42.90px;text-align:center;top:585.39px;font-size:11px;line-height:11px;font-weight:normal;color:#000;letter-spacing:0px;text-indent:0.00px">40.9 dB</div>
<div class="a" style="left:636.60px;width:71.50px;text-align:center;top:585.39px;font-size:11px;line-height:11px;font-weight:normal;color:#000;letter-spacing:0px;text-indent:0.00px">12</div>
<div class="a" style="left:708.10px;width:84.70px;text-align:center;top:585.39px;font-size:11px;line-height:11px;font-weight:normal;color:#000;letter-spacing:0px;text-indent:0.00px">61</div>
<div class="a" style="left:229.80px;width:47.00px;text-align:center;top:604.39px;font-size:11px;line-height:11px;font-weight:normal;color:#000;letter-spacing:0px;text-indent:0.00px">10</div>
<div class="a" style="left:276.80px;width:66.20px;text-align:center;top:604.39px;font-size:11px;line-height:11px;font-weight:normal;color:#000;letter-spacing:0px;text-indent:0.00px">Locked</div>
<div class="a" style="left:343.00px;width:61.30px;text-align:center;top:604.39px;font-size:11px;line-height:11px;font-weight:normal;color:#000;letter-spacing:0px;text-indent:0.00px">QAM 256</div>
<div class="a" style="left:404.30px;width:58.80px;text-align:center;top:604.39px;font-size:11px;line-height:11px;font-weight:normal;color:#000;letter-spacing:0px;text-indent:0.00px">10</div>
<div class="a" style="left:463.10px;width:77.40px;text-align:center;top:604.39px;font-size:11px;line-height:11px;font-weight:normal;color:#000;letter-spacing:0px;text-indent:0.00px">459000000 Hz</div>
<div class="a" style="left:540.50px;width:53.20px;text-align:center;top:604.39px;font-size:11px;line-height:11px;font-weight:normal;color:#000;letter-spacing:0px;text-indent:0.00px">2.0 dBmV</div>
<div class="a" style="left:593.70px;width:42.90px;text-align:center;top:604.39px;font-size:11px;line-height:11px;font-weight:normal;color:#000;letter-spacing:0px;text-indent:0.00px">43.3 dB</div>
<div class="a" style="left:636.60px;width:71.50px;text-align:center;top:604.39px;font-size:11px;line-height:11px;font-weight:normal;color:#000;letter-spacing:0px;text-indent:0.00px">23</div>
<div class="a" style="left:708.10px;width:84.70px;text-align:center;top:604.39px;font-size:11px;line-height:11px;font-weight:normal;color:#000;letter-spacing:0px;text-indent:0.00px">44</div>
<div class="a" style="left:229.80px;width:47.00px;text-align:center;top:622.49px;font-size:11px;line-height:11px;font-weight:normal;color:#000;letter-spacing:0px;text-indent:0.00px">11</div>
<div class="a" style="left:276.80px;width:66.20px;text-align:center;top:622.49px;font-size:11px;line-height:11px;font-weight:normal;color:#000;letter-spacing:0px;text-indent:0.00px">Locked</div>
<div class="a" style="left:343.00px;width:61.30px;text-align:center;top:622.49px;font-size:11px;line-height:11px;font-weight:normal;color:#000;letter-spacing:0px;text-indent:0.00px">QAM 256</div>
<div class="a" style="left:404.30px;width:58.80px;text-align:center;top:622.49px;font-size:11px;line-height:11px;font-weight:normal;color:#000;letter-spacing:0px;text-indent:0.00px">11</div>
<div class="a" style="left:463.10px;width:77.40px;text-align:center;top:622.49px;font-size:11px;line-height:11px;font-weight:normal;color:#000;letter-spacing:0px;text-indent:0.00px">465000000 Hz</div>
<div class="a" style="left:540.50px;width:53.20px;text-align:center;top:622.49px;font-size:11px;line-height:11px;font-weight:normal;color:#000;letter-spacing:0px;text-indent:0.00px">1.7 dBmV</div>
<div class="a" style="left:593.70px;width:42.90px;text-align:center;top:622.49px;font-size:11px;line-height:11px;font-weight:normal;color:#000;letter-spacing:0px;text-indent:0.00px">40.3 dB</div>
<div class="a" style="left:636.60px;width:71.50px;text-align:center;top:622.49px;font-size:11px;line-height:11px;font-weight:normal;color:#000;letter-spacing:0px;text-indent:0.00px">39</div>
<div class="a" style="left:708.10px;width:84.70px;text-align:center;top:622.49px;font-size:11px;line-height:11px;font-weight:normal;color:#000;letter-spacing:0px;text-indent:0.00px">28</div>
<div class="a" style="left:229.80px;width:47.00px;text-align:center;top:640.79px;font-size:11px;line-height:11px;font-weight:normal;color:#000;letter-spacing:0px;text-indent:0.00px">12</div>
<div class="a" style="left:276.80px;width:66.20px;text-align:center;top:640.79px;font-size:11px;line-height:11px;font-weight:normal;color:#000;letter-spacing:0px;text-indent:0.00px">Locked</div>
<div class="a" style="left:343.00px;width:61.30px;text-align:center;top:640.79px;font-size:11px;line-height:11px;font-weight:normal;color:#000;letter-spacing:0px;text-indent:0.00px">QAM 256</div>
<div class="a" style="left:404.30px;width:58.80px;text-align:center;top:640.79px;font-size:11px;line-height:11px;font-weight:normal;color:#000;letter-spacing:0px;text-indent:0.00px">12</div>
<div class="a" style="left:463.10px;width:77.40px;text-align:center;top:640.79px;font-size:11px;line-height:11px;font-weight:normal;color:#000;letter-spacing:0px;text-indent:0.00px">471000000 Hz</div>
<div class="a" style="left:540.50px;width:53.20px;text-align:center;top:640.79px;font-size:11px;line-height:11px;font-weight:normal;color:#000;letter-spacing:0px;text-indent:0.00px">1.7 dBmV</div>
<div class="a" style="left:593.70px;width:42.90px;text-align:center;top:640.79px;font-size:11px;line-height:11px;font-weight:normal;color:#000;letter-spacing:0px;text-indent:0.00px">40.9 dB</div>
<div class="a" style="left:636.60px;width:71.50px;text-align:center;top:640.79px;font-size:11px;line-height:11px;font-weight:normal;color:#000;letter-spacing:0px;text-indent:0.00px">17</div>
<div class="a" style="left:708.10px;width:84.70px;text-align:center;top:640.79px;font-size:11px;line-height:11px;font-weight:normal;color:#000;letter-spacing:0px;text-indent:0.00px">63</div>
<div class="a" style="left:229.80px;width:47.00px;text-align:center;top:659.79px;font-size:11px;line-height:11px;font-weight:normal;color:#000;letter-spacing:0px;text-indent:0.00px">13</div>
<div class="a" style="left:276.80px;width:66.20px;text-align:center;top:659.79px;font-size:11px;line-height:11px;font-weight:normal;color:#000;letter-spacing:0px;text-indent:0.00px">Locked</div>
<div class="a" style="left:343.00px;width:61.30px;text-align:center;top:659.79px;font-size:11px;line-height:11px;font-weight:normal;color:#000;letter-spacing:0px;text-indent:0.00px">QAM 256</div>
<div class="a" style="left:404.30px;width:58.80px;text-align:center;top:659.79px;font-size:11px;line-height:11px;font-weight:normal;color:#000;letter-spacing:0px;text-indent:0.00px">13</div>
<div class="a" style="left:463.10px;width:77.40px;text-align:center;top:659.79px;font-size:11px;line-height:11px;font-weight:normal;color:#000;letter-spacing:0px;text-indent:0.00px">477000000 Hz</div>
<div class="a" style="left:540.50px;width:53.20px;text-align:center;top:659.79px;font-size:11px;line-height:11px;font-weight:normal;color:#000;letter-spacing:0px;text-indent:0.00px">1.7 dBmV</div>
<div class="a" style="left:593.70px;width:42.90px;text-align:center;top:659.79px;font-size:11px;line-height:11px;font-weight:normal;color:#000;letter-spacing:0px;text-indent:0.00px">43.3 dB</div>
<div class="a" style="left:636.60px;width:71.50px;text-align:center;top:659.79px;font-size:11px;line-height:11px;font-weight:normal;color:#000;letter-spacing:0px;text-indent:0.00px">37</div>
<div class="a" style="left:708.10px;width:84.70px;text-align:center;top:659.79px;font-size:11px;line-height:11px;font-weight:normal;color:#000;letter-spacing:0px;text-indent:0.00px">28</div>
<div class="a" style="left:229.80px;width:47.00px;text-align:center;top:678.29px;font-size:11px;line-height:11px;font-weight:normal;color:#000;letter-spacing:0px;text-indent:0.00px">14</div>
<div class="a" style="left:276.80px;width:66.20px;text-align:center;top:678.29px;font-size:11px;line-height:11px;font-weight:normal;color:#000;letter-spacing:0px;text-indent:0.00px">Locked</div>
<div class="a" style="left:343.00px;width:61.30px;text-align:center;top:678.29px;font-size:11px;line-height:11px;font-weight:normal;color:#000;letter-spacing:0px;text-indent:0.00px">QAM 256</div>
<div class="a" style="left:404.30px;width:58.80px;text-align:center;top:678.29px;font-size:11px;line-height:11px;font-weight:normal;color:#000;letter-spacing:0px;text-indent:0.00px">14</div>
<div class="a" style="left:463.10px;width:77.40px;text-align:center;top:678.29px;font-size:11px;line-height:11px;font-weight:normal;color:#000;letter-spacing:0px;text-indent:0.00px">483000000 Hz</div>
<div class="a" style="left:540.50px;width:53.20px;text-align:center;top:678.29px;font-size:11px;line-height:11px;font-weight:normal;color:#000;letter-spacing:0px;text-indent:0.00px">1.4 dBmV</div>
<div class="a" style="left:593.70px;width:42.90px;text-align:center;top:678.29px;font-size:11px;line-height:11px;font-weight:normal;color:#000;letter-spacing:0px;text-indent:0.00px">40.9 dB</div>
<div class="a" style="left:636.60px;width:71.50px;text-align:center;top:678.29px;font-size:11px;line-height:11px;font-weight:normal;color:#000;letter-spacing:0px;text-indent:0.00px">43</div>
<div class="a" style="left:708.10px;width:84.70px;text-align:center;top:678.29px;font-size:11px;line-height:11px;font-weight:normal;color:#000;letter-spacing:0px;text-indent:0.00px">31</div>
<div class="a" style="left:229.80px;width:47.00px;text-align:center;top:697.59px;font-size:11px;line-height:11px;font-weight:normal;color:#000;letter-spacing:0px;text-indent:0.00px">15</div>
<div class="a" style="left:276.80px;width:66.20px;text-align:center;top:697.59px;font-size:11px;line-height:11px;font-weight:normal;color:#000;letter-spacing:0px;text-indent:0.00px">Locked</div>
<div class="a" style="left:343.00px;width:61.30px;text-align:center;top:697.59px;font-size:11px;line-height:11px;font-weight:normal;color:#000;letter-spacing:0px;text-indent:0.00px">QAM 256</div>
<div class="a" style="left:404.30px;width:58.80px;text-align:center;top:697.59px;font-size:11px;line-height:11px;font-weight:normal;color:#000;letter-spacing:0px;text-indent:0.00px">15</div>
<div class="a" style="left:463.10px;width:77.40px;text-align:center;top:697.59px;font-size:11px;line-height:11px;font-weight:normal;color:#000;letter-spacing:0px;text-indent:0.00px">489000000 Hz</div>
<div class="a" style="left:540.50px;width:53.20px;text-align:center;top:697.59px;font-size:11px;line-height:11px;font-weight:normal;color:#000;letter-spacing:0px;text-indent:0.00px">1.5 dBmV</div>
<div class="a" style="left:593.70px;width:42.90px;text-align:center;top:697.59px;font-size:11px;line-height:11px;font-weight:normal;color:#000;letter-spacing:0px;text-indent:0.00px">36.3 dB</div>
<div class="a" style="left:636.60px;width:71.50px;text-align:center;top:697.59px;font-size:11px;line-height:11px;font-weight:normal;color:#000;letter-spacing:0px;text-indent:0.00px">34</div>
<div class="a" style="left:708.10px;width:84.70px;text-align:center;top:697.59px;font-size:11px;line-height:11px;font-weight:normal;color:#000;letter-spacing:0px;text-indent:0.00px">29</div>
<div class="a" style="left:229.80px;width:47.00px;text-align:center;top:716.39px;font-size:11px;line-height:11px;font-weight:normal;color:#000;letter-spacing:0px;text-indent:0.00px">16</div>
<div class="a" style="left:276.80px;width:66.20px;text-align:center;top:716.39px;font-size:11px;line-height:11px;font-weight:normal;color:#000;letter-spacing:0px;text-indent:0.00px">Locked</div>
<div class="a" style="left:343.00px;width:61.30px;text-align:center;top:716.39px;font-size:11px;line-height:11px;font-weight:normal;color:#000;letter-spacing:0px;text-indent:0.00px">QAM 256</div>
<div class="a" style="left:404.30px;width:58.80px;text-align:center;top:716.39px;font-size:11px;line-height:11px;font-weight:normal;color:#000;letter-spacing:0px;text-indent:0.00px">16</div>
<div class="a" style="left:463.10px;width:77.40px;text-align:center;top:716.39px;font-size:11px;line-height:11px;font-weight:normal;color:#000;letter-spacing:0px;text-indent:0.00px">495000000 Hz</div>
<div class="a" style="left:540.50px;width:53.20px;text-align:center;top:716.39px;font-size:11px;line-height:11px;font-weight:normal;color:#000;letter-spacing:0px;text-indent:0.00px">1.7 dBmV</div>
<div class="a" style="left:593.70px;width:42.90px;text-align:center;top:716.39px;font-size:11px;line-height:11px;font-weight:normal;color:#000;letter-spacing:0px;text-indent:0.00px">40.3 dB</div>
<div class="a" style="left:636.60px;width:71.50px;text-align:center;top:716.39px;font-size:11px;line-height:11px;font-weight:normal;color:#000;letter-spacing:0px;text-indent:0.00px">30</div>
<div class="a" style="left:708.10px;width:84.70px;text-align:center;top:716.39px;font-size:11px;line-height:11px;font-weight:normal;color:#000;letter-spacing:0px;text-indent:0.00px">37</div>
<div class="a" style="left:229.80px;width:47.00px;text-align:center;top:735.39px;font-size:11px;line-height:11px;font-weight:normal;color:#000;letter-spacing:0px;text-indent:0.00px">17</div>
<div class="a" style="left:276.80px;width:66.20px;text-align:center;top:735.39px;font-size:11px;line-height:11px;font-weight:normal;color:#000;letter-spacing:0px;text-indent:0.00px">Locked</div>
<div class="a" style="left:343.00px;width:61.30px;text-align:center;top:735.39px;font-size:11px;line-height:11px;font-weight:normal;color:#000;letter-spacing:0px;text-indent:0.00px">QAM 256</div>
<div class="a" style="left:404.30px;width:58.80px;text-align:center;top:735.39px;font-size:11px;line-height:11px;font-weight:normal;color:#000;letter-spacing:0px;text-indent:0.00px">17</div>
<div class="a" style="left:463.10px;width:77.40px;text-align:center;top:735.39px;font-size:11px;line-height:11px;font-weight:normal;color:#000;letter-spacing:0px;text-indent:0.00px">501000000 Hz</div>
<div class="a" style="left:540.50px;width:53.20px;text-align:center;top:735.39px;font-size:11px;line-height:11px;font-weight:normal;color:#000;letter-spacing:0px;text-indent:0.00px">1.4 dBmV</div>
<div class="a" style="left:593.70px;width:42.90px;text-align:center;top:735.39px;font-size:11px;line-height:11px;font-weight:normal;color:#000;letter-spacing:0px;text-indent:0.00px">40.9 dB</div>
<div class="a" style="left:636.60px;width:71.50px;text-align:center;top:735.39px;font-size:11px;line-height:11px;font-weight:normal;color:#000;letter-spacing:0px;text-indent:0.00px">37</div>
<div class="a" style="left:708.10px;width:84.70px;text-align:center;top:735.39px;font-size:11px;line-height:11px;font-weight:normal;color:#000;letter-spacing:0px;text-indent:0.00px">30</div>
<div class="a" style="left:229.80px;width:47.00px;text-align:center;top:754.19px;font-size:11px;line-height:11px;font-weight:normal;color:#000;letter-spacing:0px;text-indent:0.00px">18</div>
<div class="a" style="left:276.80px;width:66.20px;text-align:center;top:754.19px;font-size:11px;line-height:11px;font-weight:normal;color:#000;letter-spacing:0px;text-indent:0.00px">Locked</div>
<div class="a" style="left:343.00px;width:61.30px;text-align:center;top:754.19px;font-size:11px;line-height:11px;font-weight:normal;color:#000;letter-spacing:0px;text-indent:0.00px">QAM 256</div>
<div class="a" style="left:404.30px;width:58.80px;text-align:center;top:754.19px;font-size:11px;line-height:11px;font-weight:normal;color:#000;letter-spacing:0px;text-indent:0.00px">18</div>
<div class="a" style="left:463.10px;width:77.40px;text-align:center;top:754.19px;font-size:11px;line-height:11px;font-weight:normal;color:#000;letter-spacing:0px;text-indent:0.00px">507000000 Hz</div>
<div class="a" style="left:540.50px;width:53.20px;text-align:center;top:754.19px;font-size:11px;line-height:11px;font-weight:normal;color:#000;letter-spacing:0px;text-indent:0.00px">1.2 dBmV</div>
<div class="a" style="left:593.70px;width:42.90px;text-align:center;top:754.19px;font-size:11px;line-height:11px;font-weight:normal;color:#000;letter-spacing:0px;text-indent:0.00px">40.9 dB</div>
<div class="a" style="left:636.60px;width:71.50px;text-align:center;top:754.19px;font-size:11px;line-height:11px;font-weight:normal;color:#000;letter-spacing:0px;text-indent:0.00px">29</div>
<div class="a" style="left:708.10px;width:84.70px;text-align:center;top:754.19px;font-size:11px;line-height:11px;font-weight:normal;color:#000;letter-spacing:0px;text-indent:0.00px">29</div>
<div class="a" style="left:229.80px;width:47.00px;text-align:center;top:772.49px;font-size:11px;line-height:11px;font-weight:normal;color:#000;letter-spacing:0px;text-indent:0.00px">19</div>
<div class="a" style="left:276.80px;width:66.20px;text-align:center;top:772.49px;font-size:11px;line-height:11px;font-weight:normal;color:#000;letter-spacing:0px;text-indent:0.00px">Locked</div>
<div class="a" style="left:343.00px;width:61.30px;text-align:center;top:772.49px;font-size:11px;line-height:11px;font-weight:normal;color:#000;letter-spacing:0px;text-indent:0.00px">QAM 256</div>
<div class="a" style="left:404.30px;width:58.80px;text-align:center;top:772.49px;font-size:11px;line-height:11px;font-weight:normal;color:#000;letter-spacing:0px;text-indent:0.00px">19</div>
<div class="a" style="left:463.10px;width:77.40px;text-align:center;top:772.49px;font-size:11px;line-height:11px;font-weight:normal;color:#000;letter-spacing:0px;text-indent:0.00px">513000000 Hz</div>
<div class="a" style="left:540.50px;width:53.20px;text-align:center;top:772.49px;font-size:11px;line-height:11px;font-weight:normal;color:#000;letter-spacing:0px;text-indent:0.00px">1.2 dBmV</div>
<div class="a" style="left:593.70px;width:42.90px;text-align:center;top:772.49px;font-size:11px;line-height:11px;font-weight:normal;color:#000;letter-spacing:0px;text-indent:0.00px">40.9 dB</div>
<div class="a" style="left:636.60px;width:71.50px;text-align:center;top:772.49px;font-size:11px;line-height:11px;font-weight:normal;color:#000;letter-spacing:0px;text-indent:0.00px">25</div>
<div class="a" style="left:708.10px;width:84.70px;text-align:center;top:772.49px;font-size:11px;line-height:11px;font-weight:normal;color:#000;letter-spacing:0px;text-indent:0.00px">30</div>
</body></html>
